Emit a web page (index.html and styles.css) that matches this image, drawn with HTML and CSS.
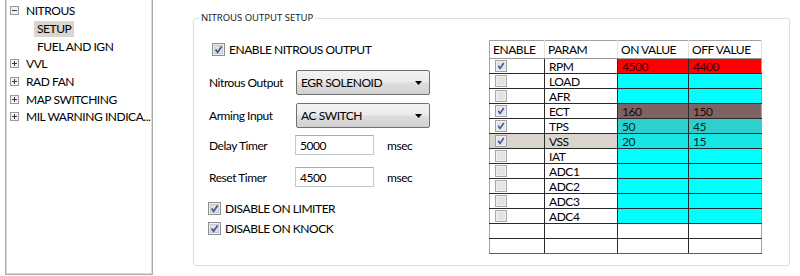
FILE: index.html
```html
<!DOCTYPE html>
<html>
<head>
<meta charset="utf-8">
<link rel="stylesheet" href="styles.css">
</head>
<body>
<div class="app">
  <div class="tree">
    <div class="node"><svg class="exp" width="9" height="9" viewBox="0 0 9 9"><rect x="0.5" y="0.5" width="8" height="8" fill="#f3f3f3" stroke="#9a9a9a"/><path d="M2 4.5H7" stroke="#3a3a3a"/></svg><span>NITROUS</span></div>
    <div class="node child"><span class="sel">SETUP</span></div>
    <div class="node child"><span class="txt">FUEL AND IGN</span></div>
    <div class="node"><svg class="exp" width="9" height="9" viewBox="0 0 9 9"><rect x="0.5" y="0.5" width="8" height="8" fill="#f3f3f3" stroke="#9a9a9a"/><path d="M2 4.5H7M4.5 2V7" stroke="#3a3a3a"/></svg><span>VVL</span></div>
    <div class="node"><svg class="exp" width="9" height="9" viewBox="0 0 9 9"><rect x="0.5" y="0.5" width="8" height="8" fill="#f3f3f3" stroke="#9a9a9a"/><path d="M2 4.5H7M4.5 2V7" stroke="#3a3a3a"/></svg><span>RAD FAN</span></div>
    <div class="node"><svg class="exp" width="9" height="9" viewBox="0 0 9 9"><rect x="0.5" y="0.5" width="8" height="8" fill="#f3f3f3" stroke="#9a9a9a"/><path d="M2 4.5H7M4.5 2V7" stroke="#3a3a3a"/></svg><span>MAP SWITCHING</span></div>
    <div class="node"><svg class="exp" width="9" height="9" viewBox="0 0 9 9"><rect x="0.5" y="0.5" width="8" height="8" fill="#f3f3f3" stroke="#9a9a9a"/><path d="M2 4.5H7M4.5 2V7" stroke="#3a3a3a"/></svg><span>MIL WARNING INDICA...</span></div>
  </div>

  <fieldset class="group">
    <legend>NITROUS OUTPUT SETUP</legend>
    <div class="group-body">
      <div class="form">
        <div class="check enable">
          <svg width="13" height="13" viewBox="0 0 13 13"><rect x="0.5" y="0.5" width="12" height="12" fill="#eeeeee" stroke="#8e8f8f"/><rect x="2.5" y="2.5" width="8" height="8" fill="#e2e2e2" stroke="#c9c9c9"/><path d="M3.6 6.4L5.6 9.2L9.6 3.4" stroke="#3b54a4" stroke-width="1.7" fill="none"/></svg>
          <span>ENABLE NITROUS OUTPUT</span>
        </div>
        <div class="field f1">
          <span class="lbl">Nitrous Output</span>
          <div class="select"><span>EGR SOLENOID</span><svg width="7" height="4" viewBox="0 0 7 4"><path d="M0 0H7L3.5 4Z" fill="#000"/></svg></div>
        </div>
        <div class="field f2">
          <span class="lbl">Arming Input</span>
          <div class="select"><span>AC SWITCH</span><svg width="7" height="4" viewBox="0 0 7 4"><path d="M0 0H7L3.5 4Z" fill="#000"/></svg></div>
        </div>
        <div class="field f3">
          <span class="lbl tl">Delay Timer</span>
          <div class="input">5000</div>
          <span class="unit">msec</span>
        </div>
        <div class="field f4">
          <span class="lbl tl">Reset Timer</span>
          <div class="input">4500</div>
          <span class="unit">msec</span>
        </div>
        <div class="check d1">
          <svg width="13" height="13" viewBox="0 0 13 13"><rect x="0.5" y="0.5" width="12" height="12" fill="#eeeeee" stroke="#8e8f8f"/><rect x="2.5" y="2.5" width="8" height="8" fill="#e2e2e2" stroke="#c9c9c9"/><path d="M3.6 6.4L5.6 9.2L9.6 3.4" stroke="#3b54a4" stroke-width="1.7" fill="none"/></svg>
          <span>DISABLE ON LIMITER</span>
        </div>
        <div class="check d2">
          <svg width="13" height="13" viewBox="0 0 13 13"><rect x="0.5" y="0.5" width="12" height="12" fill="#eeeeee" stroke="#8e8f8f"/><rect x="2.5" y="2.5" width="8" height="8" fill="#e2e2e2" stroke="#c9c9c9"/><path d="M3.6 6.4L5.6 9.2L9.6 3.4" stroke="#3b54a4" stroke-width="1.7" fill="none"/></svg>
          <span>DISABLE ON KNOCK</span>
        </div>
      </div>

      <table class="grid">
        <colgroup><col class="c1"><col class="c2"><col class="c3"><col class="c4"></colgroup>
        <thead>
          <tr><th>ENABLE</th><th>PARAM</th><th>ON VALUE</th><th>OFF VALUE</th></tr>
        </thead>
        <tbody>
          <tr><td class="cb"><svg class="on" width="12" height="12" viewBox="0 0 12 12"><rect x="0.5" y="0.5" width="11" height="11" fill="#f0f0f0" stroke="#a0a0a0"/><rect x="2" y="2" width="8" height="8" fill="#e4e4e4"/><path d="M3.2 5.8L5 8.4L8.8 3" stroke="#3b54a4" stroke-width="1.5" fill="none"/></svg></td><td>RPM</td><td class="red">4500</td><td class="red">4400</td></tr>
          <tr><td class="cb"><svg width="12" height="12" viewBox="0 0 12 12"><rect x="0.5" y="0.5" width="11" height="11" fill="#f0f0f0" stroke="#a8a8a8"/><rect x="2" y="2" width="8" height="8" fill="#e4e4e4"/></svg></td><td>LOAD</td><td class="cy"></td><td class="cy"></td></tr>
          <tr><td class="cb"><svg width="12" height="12" viewBox="0 0 12 12"><rect x="0.5" y="0.5" width="11" height="11" fill="#f0f0f0" stroke="#a8a8a8"/><rect x="2" y="2" width="8" height="8" fill="#e4e4e4"/></svg></td><td>AFR</td><td class="cy"></td><td class="cy"></td></tr>
          <tr><td class="cb"><svg width="12" height="12" viewBox="0 0 12 12"><rect x="0.5" y="0.5" width="11" height="11" fill="#f0f0f0" stroke="#a0a0a0"/><rect x="2" y="2" width="8" height="8" fill="#e4e4e4"/><path d="M3.2 5.8L5 8.4L8.8 3" stroke="#3b54a4" stroke-width="1.5" fill="none"/></svg></td><td>ECT</td><td class="br">160</td><td class="br">150</td></tr>
          <tr><td class="cb"><svg width="12" height="12" viewBox="0 0 12 12"><rect x="0.5" y="0.5" width="11" height="11" fill="#f0f0f0" stroke="#a0a0a0"/><rect x="2" y="2" width="8" height="8" fill="#e4e4e4"/><path d="M3.2 5.8L5 8.4L8.8 3" stroke="#3b54a4" stroke-width="1.5" fill="none"/></svg></td><td>TPS</td><td class="tl2">50</td><td class="tl2">45</td></tr>
          <tr class="selrow"><td class="cb"><svg width="12" height="12" viewBox="0 0 12 12"><rect x="0.5" y="0.5" width="11" height="11" fill="#f0f0f0" stroke="#a0a0a0"/><rect x="2" y="2" width="8" height="8" fill="#e4e4e4"/><path d="M3.2 5.8L5 8.4L8.8 3" stroke="#3b54a4" stroke-width="1.5" fill="none"/></svg></td><td>VSS</td><td class="cy2">20</td><td class="cy2">15</td></tr>
          <tr><td class="cb"><svg width="12" height="12" viewBox="0 0 12 12"><rect x="0.5" y="0.5" width="11" height="11" fill="#f0f0f0" stroke="#a8a8a8"/><rect x="2" y="2" width="8" height="8" fill="#e4e4e4"/></svg></td><td>IAT</td><td class="cy"></td><td class="cy"></td></tr>
          <tr><td class="cb"><svg width="12" height="12" viewBox="0 0 12 12"><rect x="0.5" y="0.5" width="11" height="11" fill="#f0f0f0" stroke="#a8a8a8"/><rect x="2" y="2" width="8" height="8" fill="#e4e4e4"/></svg></td><td>ADC1</td><td class="cy"></td><td class="cy"></td></tr>
          <tr><td class="cb"><svg width="12" height="12" viewBox="0 0 12 12"><rect x="0.5" y="0.5" width="11" height="11" fill="#f0f0f0" stroke="#a8a8a8"/><rect x="2" y="2" width="8" height="8" fill="#e4e4e4"/></svg></td><td>ADC2</td><td class="cy"></td><td class="cy"></td></tr>
          <tr><td class="cb"><svg width="12" height="12" viewBox="0 0 12 12"><rect x="0.5" y="0.5" width="11" height="11" fill="#f0f0f0" stroke="#a8a8a8"/><rect x="2" y="2" width="8" height="8" fill="#e4e4e4"/></svg></td><td>ADC3</td><td class="cy"></td><td class="cy"></td></tr>
          <tr><td class="cb"><svg width="12" height="12" viewBox="0 0 12 12"><rect x="0.5" y="0.5" width="11" height="11" fill="#f0f0f0" stroke="#a8a8a8"/><rect x="2" y="2" width="8" height="8" fill="#e4e4e4"/></svg></td><td>ADC4</td><td class="cy"></td><td class="cy"></td></tr>
          <tr><td></td><td></td><td></td><td></td></tr>
          <tr><td></td><td></td><td></td><td></td></tr>
        </tbody>
      </table>
    </div>
  </fieldset>
</div>
</body>
</html>
```

FILE: styles.css
```css
* { box-sizing: border-box; }

html, body {
  margin: 0;
  padding: 0;
  background: #ffffff;
}

body {
  width: 800px;
  height: 276px;
  overflow: hidden;
  font-family: Lato, "Noto Sans", sans-serif;
  font-size: 12px;
  letter-spacing: -0.45px;
  color: #000;
}

.app {
  display: flex;
  align-items: flex-start;
}

/* ---------- tree ---------- */
.tree {
  margin-left: 5px;
  width: 148px;
  height: 275px;
  border: 1px solid #aaaaaa;
  border-top: none;
  box-shadow: inset 1px 0 0 #dcdcdc, inset -1px 0 0 #dcdcdc, inset 0 -1px 0 #dcdcdc;
  padding-top: 2px;
}

.node {
  height: 17.7px;
  display: flex;
  align-items: center;
  padding-left: 4px;
  white-space: nowrap;
}

.node .exp {
  flex: none;
  margin-right: 7px;
}

.node.child {
  padding-left: 28px;
}

.node .sel {
  background: #dad6cf;
  padding: 1px 3px;
  line-height: 14px;
}

.node .txt {
  padding-left: 3px;
}

/* ---------- group box ---------- */
.group {
  margin: 12px 0 0 40px;
  padding: 0;
  width: 597px;
  height: 254px;
  min-width: 0;
  border: 1px solid #d5dfe5;
  border-radius: 3px;
}

.group legend {
  margin-left: 5px;
  padding: 0 2px;
  font-family: "Noto Sans", sans-serif;
  font-size: 9.5px;
  letter-spacing: 0;
  line-height: 12px;
  color: #1a1a1a;
}

.group-body {
  display: flex;
  align-items: flex-start;
  padding-left: 14px;
}

.form {
  width: 281px;
  flex: none;
  display: flex;
  flex-direction: column;
}

.check {
  display: flex;
  align-items: center;
  height: 13px;
  white-space: nowrap;
}

.check svg {
  flex: none;
  margin-right: 4px;
}

.check.enable { margin-top: 19px; margin-left: 4px; }
.check.d1 { margin-top: 15px; }
.check.d2 { margin-top: 7px; }

.field {
  display: flex;
  align-items: center;
  white-space: nowrap;
}

.field.f1 { margin-top: 14px; }
.field.f2 { margin-top: 8px; }
.field.f3 { margin-top: 7px; }
.field.f4 { margin-top: 12px; }

.lbl {
  width: 88px;
  flex: none;
  padding-left: 1px;
}

.lbl.tl { width: 87px; }

.select {
  width: 134px;
  height: 25px;
  border: 1px solid #707070;
  border-radius: 2px;
  background: linear-gradient(#f2f2f2 0%, #ebebeb 48%, #dddddd 52%, #d2d2d2 100%);
  display: flex;
  align-items: center;
  justify-content: space-between;
  padding: 0 7px 0 4px;
}

.input {
  width: 79px;
  height: 20px;
  border: 1px solid #c4c8ce;
  border-top-color: #abadb3;
  background: #fff;
  display: flex;
  align-items: center;
  padding-left: 4px;
}

.unit {
  margin-left: 13px;
}

/* ---------- table ---------- */
.grid {
  margin-top: 16px;
  border-collapse: collapse;
  width: 272px;
  table-layout: fixed;
  border: 1px solid #a3a3a3;
}

.grid col.c1 { width: 55px; }
.grid col.c2 { width: 73px; }
.grid col.c3 { width: 71px; }
.grid col.c4 { width: 73px; }

.grid th {
  height: 18px;
  padding: 0 0 0 3px;
  font-weight: normal;
  text-align: left;
  background: #fff;
  border-right: 1px solid #e2e2e2;
  border-bottom: 1px solid #9a9a9a;
  line-height: 16px;
  white-space: nowrap;
}

.grid td {
  height: 15px;
  padding: 0 0 0 4px;
  line-height: 13px;
  border: 1px solid #2a2a2a;
  white-space: nowrap;
}

.grid tr > td:first-child { border-left: 1px solid #a3a3a3; }
.grid tr > td:last-child { border-right: 1px solid #a3a3a3; }
.grid tbody tr:last-child td { border-bottom: 1px solid #5a5a5a; }

.grid td.cb {
  padding: 0 0 0 5px;
}

.grid td.cb svg {
  display: block;
}

.grid td.red { background: #ff0000; color: #3a0000; }
.grid td.cy { background: #00ffff; }
.grid td.br { background: #7f6262; color: #1a0a0a; }
.grid td.tl2 { background: #2ecfcf; color: #062626; }
.grid td.cy2 { background: #14e6e6; color: #052424; }

.grid tr.selrow td:nth-child(1),
.grid tr.selrow td:nth-child(2) { background: #d9d5cd; }
```
